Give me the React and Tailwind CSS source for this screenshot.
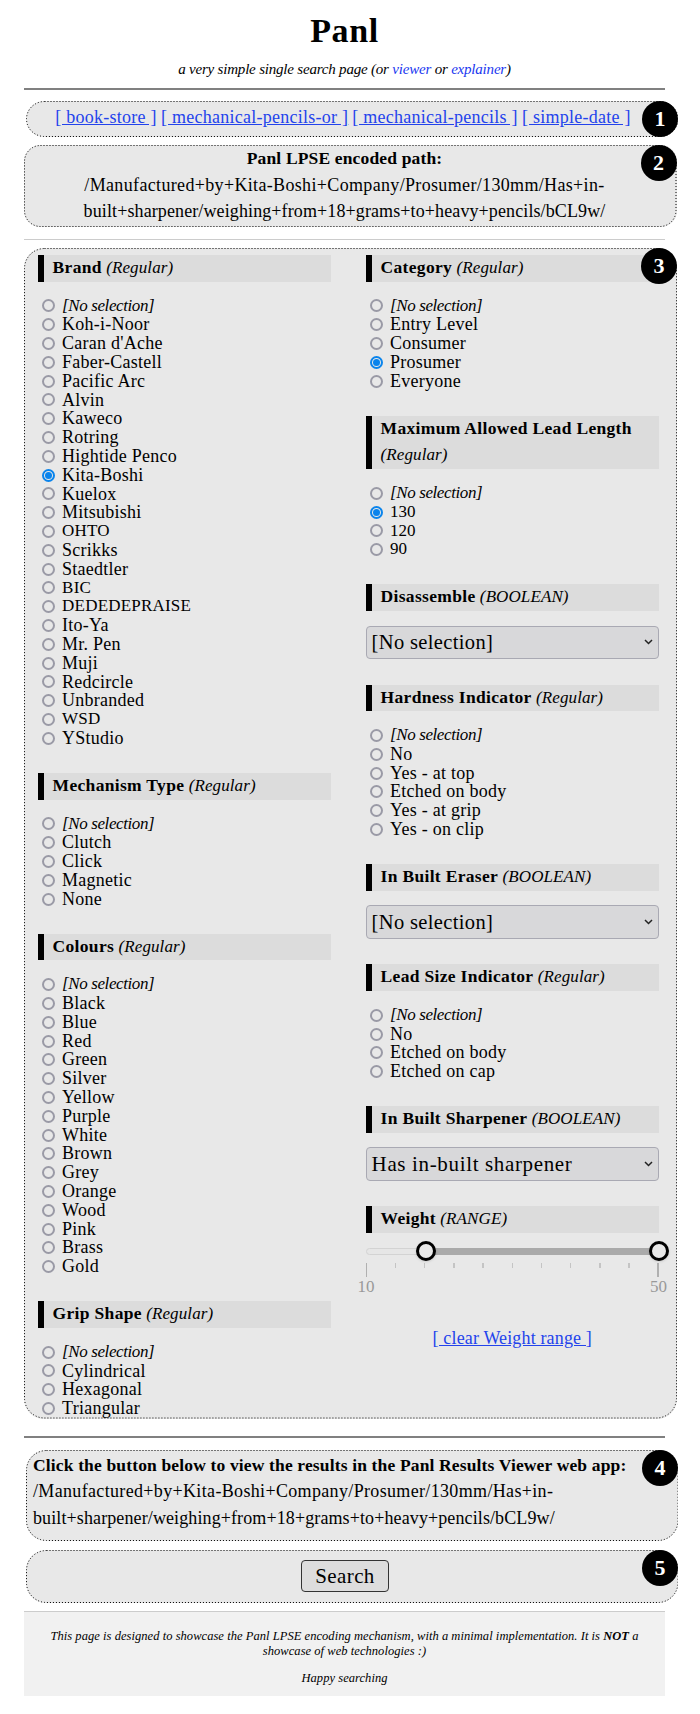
import React from "react";

const brands = ["Koh-i-Noor", "Caran d'Ache", "Faber-Castell", "Pacific Arc", "Alvin", "Kaweco", "Rotring", "Hightide Penco", "Kita-Boshi", "Kuelox", "Mitsubishi", "OHTO", "Scrikks", "Staedtler", "BIC", "DEDEDEPRAISE", "Ito-Ya", "Mr. Pen", "Muji", "Redcircle", "Unbranded", "WSD", "YStudio"];
const colours = ["Black", "Blue", "Red", "Green", "Silver", "Yellow", "Purple", "White", "Brown", "Grey", "Orange", "Wood", "Pink", "Brass", "Gold"];
const ticks = [1, 2, 3, 4, 5, 6, 7, 8, 9];

function Badge({ children }) {
  return (
    <span className="absolute top-0 right-0 flex size-9 items-center justify-center rounded-full bg-black pb-px text-[22px] font-bold text-white">
      {children}
    </span>
  );
}

function Panel({ className = "", radius, badge, children }) {
  return (
    <section className={"relative bg-[#e8e8e8] p-px " + className}>
      {children}
      <svg className="pointer-events-none absolute inset-0 size-full" fill="none" stroke="#000" strokeDasharray="1 2">
        <rect x="0.5" y="0.5" rx={radius} className="h-[calc(100%-1px)] w-[calc(100%-1px)]" />
      </svg>
      <Badge>{badge}</Badge>
    </section>
  );
}

function Heading({ title, type, children }) {
  return (
    <h2 className="border-l-6 border-black bg-[#dcdcdc] pl-[9px] text-[17px] leading-[26.6px] tracking-[0.1px]">
      <b className="text-[17.5px] leading-5 tracking-[0.32px]">{title}</b>
      {children || " "}
      <i>({type})</i>
    </h2>
  );
}

// Capitals and digits are set tighter than mixed-case labels.
function labelStyle(label, italic) {
  if (italic) return "text-[17px] italic tracking-[-0.4px]";
  if (/^[A-Z]+$/.test(label)) return "text-[17px] tracking-[0.2px]";
  if (/^[0-9]+$/.test(label)) return "text-[17px] tracking-[-0.1px]";
  return "text-[18px] tracking-[0.25px]";
}

function Radio({ label, checked, italic }) {
  return (
    <label className="flex h-[18.8px] items-center">
      <span className={"mr-[7px] flex size-[13px] shrink-0 items-center justify-center rounded-full border-2 " + (checked ? "border-[#0a84ec]" : "border-[#9a9aa6]")}>
        {checked && <span className="size-[7px] rounded-full bg-[#0a84ec]" />}
      </span>
      <span className={"leading-[18.8px] " + labelStyle(label, italic)}>{label}</span>
    </label>
  );
}

function Facet({ title, type = "Regular", items, selected, breakType }) {
  return (
    <div className="mb-[25.2px]">
      <Heading title={title} type={type}>{breakType && <br />}</Heading>
      <div className="pt-[15px] pl-[4.5px]">
        <Radio label="[No selection]" italic />
        {items.map((item) => <Radio key={item} label={item} checked={item === selected} />)}
      </div>
    </div>
  );
}

function SelectFacet({ title, value, wide }) {
  return (
    <div className="mb-[25.6px]">
      <Heading title={title} type="BOOLEAN" />
      <div className="mt-[14.6px] flex h-[33.4px] items-center justify-between rounded-[4px] border border-[#a9a9b3] bg-[#d8d8da] pr-[5px] pl-[5px]">
        <span className={"leading-[30px] " + (wide ? "text-[21px] tracking-[0.65px]" : "text-[20.5px] tracking-[0.35px]")}>{value}</span>
        <svg width="9" height="6" viewBox="0 0 9 6" fill="none" stroke="#222" strokeWidth="1.5"><path d="M1 1l3.5 3.5L8 1" /></svg>
      </div>
    </div>
  );
}

function Path() {
  return (
    <>
      <span className="tracking-[0.34px]">/Manufactured+by+Kita-Boshi+Company/Prosumer/130mm/Has+in-</span><br />
      <span className="tracking-[0.11px]">built+sharpener/weighing+from+18+grams+to+heavy+pencils/bCL9w/</span>
    </>
  );
}

export default function App() {
  return (
    <main className="flex h-[1714px] w-[700px] flex-col bg-white pr-[22px] pl-6 font-['Liberation_Serif',serif] text-black">
      <header className="flex h-[87.5px] w-[641px] flex-col items-center pt-[10px]">
        <h1 className="text-[34px] leading-[42px] font-bold tracking-[0.6px]">Panl</h1>
        <p className="mt-[6.5px] text-[15px] leading-5 tracking-[-0.2px] whitespace-nowrap italic">
          a very simple single search page (or <span className="text-[#1a38f0]">viewer</span> or <span className="text-[#1a38f0]">explainer</span>)
        </p>
      </header>
      <hr className="h-[2px] w-[641px] shrink-0 border-0 bg-[#808080]" />

      <Panel badge="1" radius="18" className="mt-[11.5px] ml-[1.5px] h-9 rounded-[18px]">
        <nav className="flex w-[633px] justify-center gap-[4.2px] pt-[2px] text-[18px] leading-[26px] tracking-[0.25px] whitespace-nowrap text-[#2343ec] underline">
          <a>[ book-store ]</a><a>[ mechanical-pencils-or ]</a><a>[ mechanical-pencils ]</a><a>[ simple-date ]</a>
        </nav>
      </Panel>

      <Panel badge="2" radius="16" className="mt-2 mr-[1.5px] h-[82px] rounded-[16px]">
        <div className="-mt-px w-[639px] text-center text-[18px] leading-[26.6px] whitespace-nowrap">
          <b className="text-[17.5px] leading-5 tracking-[0.15px]">Panl LPSE encoded path:</b><br /><Path />
        </div>
      </Panel>
      <hr className="mt-3 h-px w-[641px] shrink-0 border-0 bg-[#cccccc]" />

      <Panel badge="3" radius="20" className="mt-2 mr-px h-[1170.5px] rounded-[20px]">
        <div className="flex gap-[34.6px] pt-[6px] pl-[12.6px]">
          <div className="w-[293.4px]">
            <Facet title="Brand" items={brands} selected="Kita-Boshi" />
            <Facet title="Mechanism Type" items={["Clutch", "Click", "Magnetic", "None"]} />
            <Facet title="Colours" items={colours} />
            <Facet title="Grip Shape" items={["Cylindrical", "Hexagonal", "Triangular"]} />
          </div>
          <div className="w-[293.4px]">
            <Facet title="Category" items={["Entry Level", "Consumer", "Prosumer", "Everyone"]} selected="Prosumer" />
            <Facet title="Maximum Allowed Lead Length" items={["130", "120", "90"]} selected="130" breakType />
            <SelectFacet title="Disassemble" value="[No selection]" />
            <Facet title="Hardness Indicator" items={["No", "Yes - at top", "Etched on body", "Yes - at grip", "Yes - on clip"]} />
            <SelectFacet title="In Built Eraser" value="[No selection]" />
            <Facet title="Lead Size Indicator" items={["No", "Etched on body", "Etched on cap"]} />
            <SelectFacet title="In Built Sharpener" value="Has in-built sharpener" wide />
            <Heading title="Weight" type="RANGE" />
            <div className="relative mt-[14.6px] h-[7px] rounded-full border border-[#d3d3d3] bg-[#e6e6e6]">
              <span className="absolute -top-px -right-px left-[60px] h-[7px] bg-[#aaaaaa]" />
              <span className="absolute top-[-7.5px] left-[49px] size-5 rounded-full border-[3.5px] border-black bg-[#e8e8e8] shadow-sm" />
              <span className="absolute top-[-7.5px] -right-[11px] size-5 rounded-full border-[3.5px] border-black bg-[#e8e8e8] shadow-sm" />
            </div>
            <div className="mt-2 flex h-[14px] justify-between">
              <span className="h-[14px] w-[1.5px] bg-[#b0b0b0]" />
              {ticks.map((tick) => <span key={tick} className="h-[5px] w-[1.5px] bg-[#c4c4c4]" />)}
              <span className="h-[14px] w-[1.5px] bg-[#b0b0b0]" />
            </div>
            <div className="-mx-2 flex justify-between text-[17px] leading-[20px] text-[#999999]"><span>10</span><span>50</span></div>
            <div className="mt-[28px] text-center text-[18px] leading-[26px] tracking-[0.15px] text-[#2343ec] underline">[ clear Weight range ]</div>
          </div>
        </div>
      </Panel>
      <hr className="mt-[17px] h-[2px] w-[641px] shrink-0 border-0 bg-[#808080]" />

      <Panel badge="4" radius="20" className="mt-[12.2px] ml-[1.5px] h-[91px] rounded-[20px]">
        <div className="pt-px pl-[6.5px] text-[18px] leading-[26.6px] whitespace-nowrap">
          <b className="text-[17.5px] leading-5 tracking-[0.15px]">Click the button below to view the results in the Panl Results Viewer web app:</b><br /><Path />
        </div>
      </Panel>

      <Panel badge="5" radius="20" className="mt-[9px] ml-[1.5px] h-[53px] rounded-[20px]">
        <div className="flex w-[637px] justify-center pt-[9px]">
          <button className="h-8 w-[88px] rounded-[4px] border border-[#333333] bg-[#dddddd] text-[21px] leading-7 tracking-[0.4px]">Search</button>
        </div>
      </Panel>

      <footer className="mt-2 h-[85px] w-[641px] border-t border-[#cccccc] bg-[#f1f1f1] pt-[17px] text-center text-[12.5px] leading-[15.4px] tracking-[0.05px] italic">
        <p>This page is designed to showcase the Panl LPSE encoding mechanism, with a minimal implementation. It is <b>NOT</b> a<br />showcase of web technologies :)</p>
        <p className="mt-[11px]">Happy searching</p>
      </footer>
    </main>
  );
}
